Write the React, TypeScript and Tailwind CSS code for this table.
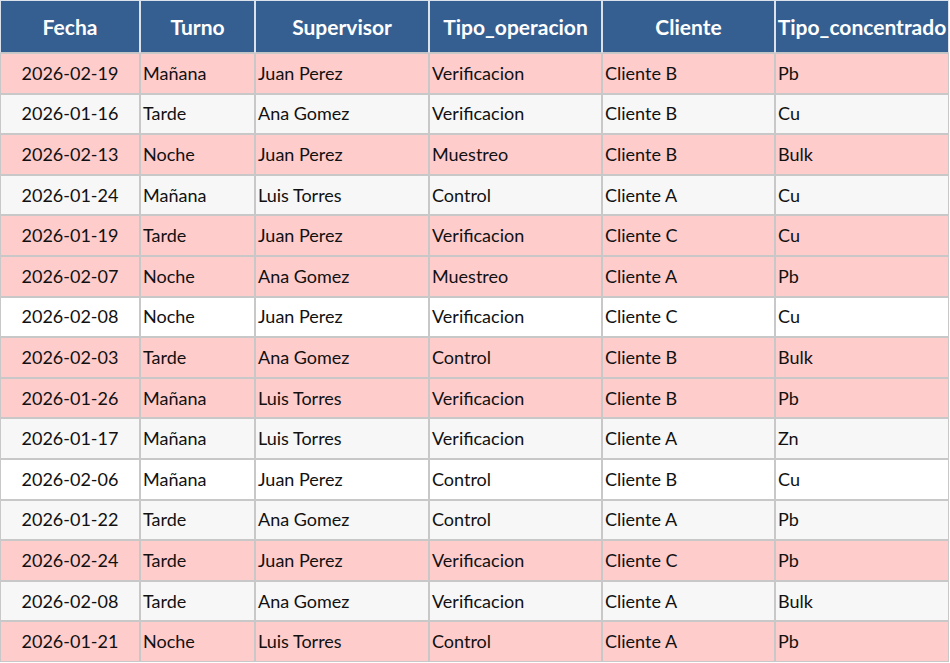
import React from "react";

const rows: [string, string, string, string, string, string, string][] = [
  ["2026-02-19", "Mañana", "Juan Perez", "Verificacion", "Cliente B", "Pb", "p"],
  ["2026-01-16", "Tarde", "Ana Gomez", "Verificacion", "Cliente B", "Cu", "g"],
  ["2026-02-13", "Noche", "Juan Perez", "Muestreo", "Cliente B", "Bulk", "p"],
  ["2026-01-24", "Mañana", "Luis Torres", "Control", "Cliente A", "Cu", "g"],
  ["2026-01-19", "Tarde", "Juan Perez", "Verificacion", "Cliente C", "Cu", "p"],
  ["2026-02-07", "Noche", "Ana Gomez", "Muestreo", "Cliente A", "Pb", "p"],
  ["2026-02-08", "Noche", "Juan Perez", "Verificacion", "Cliente C", "Cu", "w"],
  ["2026-02-03", "Tarde", "Ana Gomez", "Control", "Cliente B", "Bulk", "p"],
  ["2026-01-26", "Mañana", "Luis Torres", "Verificacion", "Cliente B", "Pb", "p"],
  ["2026-01-17", "Mañana", "Luis Torres", "Verificacion", "Cliente A", "Zn", "g"],
  ["2026-02-06", "Mañana", "Juan Perez", "Control", "Cliente B", "Cu", "w"],
  ["2026-01-22", "Tarde", "Ana Gomez", "Control", "Cliente A", "Pb", "g"],
  ["2026-02-24", "Tarde", "Juan Perez", "Verificacion", "Cliente C", "Pb", "p"],
  ["2026-02-08", "Tarde", "Ana Gomez", "Verificacion", "Cliente A", "Bulk", "g"],
  ["2026-01-21", "Noche", "Luis Torres", "Control", "Cliente A", "Pb", "p"],
];

const headers = ["Fecha", "Turno", "Supervisor", "Tipo_operacion", "Cliente", "Tipo_concentrado"];

const bgFor: Record<string, string> = {
  p: "bg-[#ffcccc]",
  g: "bg-[#f7f7f7]",
  w: "bg-white",
};

export default function App() {
  return (
    <div
      className="w-[950px] h-[663px] overflow-hidden bg-white"
      style={{ fontFamily: "Lato, 'Open Sans', sans-serif" }}
    >
      <div className="grid w-[949px] grid-cols-[140px_115px_174px_173px_173px_174px]">
        {headers.map((h) => (
          <div
            key={h}
            className="h-[53px] box-border overflow-hidden whitespace-nowrap border border-[#dbe2ec] border-b-[#c4c4c4] bg-[#365f91] px-[1px] flex items-center justify-center text-center text-[21px] font-bold text-white"
          >
            <span className="block w-full overflow-visible text-center">{h}</span>
          </div>
        ))}
        {rows.map((r, i) =>
          r.slice(0, 6).map((c, j) => (
            <div
              key={i + "-" + j}
              className={`h-[40.6px] box-border overflow-hidden whitespace-nowrap border border-[#c8c8c8] ${bgFor[r[6]]} flex items-center text-[18px] text-[#111111] ${
                j === 0 ? "justify-center" : "justify-start pl-[2px]"
              }`}
            >
              {c}
            </div>
          ))
        )}
      </div>
    </div>
  );
}
